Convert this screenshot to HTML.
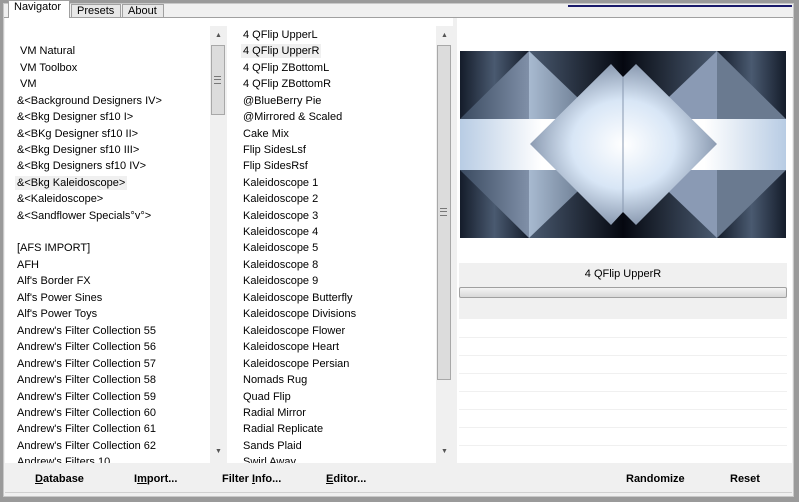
<!DOCTYPE html>
<html><head><style>
body{margin:0;width:799px;height:502px;overflow:hidden;background:#fff;font-family:"Liberation Sans",sans-serif;font-size:11px;color:#000;position:relative}
.a{position:absolute}
.list div{position:absolute;white-space:nowrap;line-height:14px}
.sb{position:absolute;background:#f0f0f0}
</style></head><body>
<div class="a" style="left:0;top:0;width:799px;height:502px;background:#9a9a9a"></div>
<div class="a" style="left:3px;top:3px;width:791px;height:494px;background:#f0f0f0;border:1px solid #c8c8c8;box-sizing:border-box"></div>
<div class="a" style="left:4px;top:17px;width:789px;height:1px;background:#a0a0a0"></div>
<div class="a" style="left:568px;top:5px;width:224px;height:2px;background:#1a1a6a"></div>
<!-- tabs -->
<div class="a" style="left:8px;top:0;width:62px;height:18px;background:#fff;border:1px solid #a0a0a0;border-bottom:none;box-sizing:border-box;padding:0 0 0 5px;line-height:12px">Navigator</div>
<div class="a" style="left:71px;top:4px;width:50px;height:14px;background:#e8e8e8;border:1px solid #a0a0a0;box-sizing:border-box;padding-left:5px;line-height:13px">Presets</div>
<div class="a" style="left:122px;top:4px;width:42px;height:14px;background:#e8e8e8;border:1px solid #a0a0a0;box-sizing:border-box;padding-left:5px;line-height:13px">About</div>
<!-- main white area -->
<div class="a" style="left:5px;top:18px;width:787px;height:445px;background:#fff"></div>
<!-- left list -->
<div class="list">
<div style="left:20px;top:44px">VM Natural</div>
<div style="left:20px;top:61px">VM Toolbox</div>
<div style="left:20px;top:77px">VM</div>
<div style="left:17px;top:94px">&amp;&lt;Background Designers IV&gt;</div>
<div style="left:17px;top:110px">&amp;&lt;Bkg Designer sf10 I&gt;</div>
<div style="left:17px;top:127px">&amp;&lt;BKg Designer sf10 II&gt;</div>
<div style="left:17px;top:143px">&amp;&lt;Bkg Designer sf10 III&gt;</div>
<div style="left:17px;top:159px">&amp;&lt;Bkg Designers sf10 IV&gt;</div>
<div style="left:15px;top:176px;background:#f0f0f0;padding:0 2px">&amp;&lt;Bkg Kaleidoscope&gt;</div>
<div style="left:17px;top:192px">&amp;&lt;Kaleidoscope&gt;</div>
<div style="left:17px;top:209px">&amp;&lt;Sandflower Specials°v°&gt;</div>
<div style="left:17px;top:241px">[AFS IMPORT]</div>
<div style="left:17px;top:258px">AFH</div>
<div style="left:17px;top:274px">Alf's Border FX</div>
<div style="left:17px;top:291px">Alf's Power Sines</div>
<div style="left:17px;top:307px">Alf's Power Toys</div>
<div style="left:17px;top:324px">Andrew's Filter Collection 55</div>
<div style="left:17px;top:340px">Andrew's Filter Collection 56</div>
<div style="left:17px;top:357px">Andrew's Filter Collection 57</div>
<div style="left:17px;top:373px">Andrew's Filter Collection 58</div>
<div style="left:17px;top:390px">Andrew's Filter Collection 59</div>
<div style="left:17px;top:406px">Andrew's Filter Collection 60</div>
<div style="left:17px;top:422px">Andrew's Filter Collection 61</div>
<div style="left:17px;top:439px">Andrew's Filter Collection 62</div>
<div style="left:17px;top:455px">Andrew's Filters 10</div>
</div>
<!-- middle list -->
<div class="list">
<div style="left:243px;top:28px">4 QFlip UpperL</div>
<div style="left:241px;top:44px;background:#f0f0f0;padding:0 2px">4 QFlip UpperR</div>
<div style="left:243px;top:61px">4 QFlip ZBottomL</div>
<div style="left:243px;top:77px">4 QFlip ZBottomR</div>
<div style="left:243px;top:94px">@BlueBerry Pie</div>
<div style="left:243px;top:110px">@Mirrored &amp; Scaled</div>
<div style="left:243px;top:127px">Cake Mix</div>
<div style="left:243px;top:143px">Flip SidesLsf</div>
<div style="left:243px;top:159px">Flip SidesRsf</div>
<div style="left:243px;top:176px">Kaleidoscope 1</div>
<div style="left:243px;top:192px">Kaleidoscope 2</div>
<div style="left:243px;top:209px">Kaleidoscope 3</div>
<div style="left:243px;top:225px">Kaleidoscope 4</div>
<div style="left:243px;top:241px">Kaleidoscope 5</div>
<div style="left:243px;top:258px">Kaleidoscope 8</div>
<div style="left:243px;top:274px">Kaleidoscope 9</div>
<div style="left:243px;top:291px">Kaleidoscope Butterfly</div>
<div style="left:243px;top:307px">Kaleidoscope Divisions</div>
<div style="left:243px;top:324px">Kaleidoscope Flower</div>
<div style="left:243px;top:340px">Kaleidoscope Heart</div>
<div style="left:243px;top:357px">Kaleidoscope Persian</div>
<div style="left:243px;top:373px">Nomads Rug</div>
<div style="left:243px;top:390px">Quad Flip</div>
<div style="left:243px;top:406px">Radial Mirror</div>
<div style="left:243px;top:422px">Radial Replicate</div>
<div style="left:243px;top:439px">Sands Plaid</div>
<div style="left:243px;top:455px">Swirl Away</div>
</div>
<!-- scrollbars -->
<div class="sb" style="left:210px;top:26px;width:17px;height:437px"></div>
<div class="a" style="left:211px;top:45px;width:14px;height:70px;background:#dcdcdc;border:1px solid #a8a8a8;box-sizing:border-box"></div>
<div class="a" style="left:214px;top:76px;width:7px;height:6px;border-top:1px solid #777;border-bottom:1px solid #777"></div>
<div class="a" style="left:214px;top:79px;width:7px;height:1px;background:#777"></div>
<div class="a" style="left:215px;top:32px;font-size:7px;color:#555">▲</div>
<div class="a" style="left:215px;top:448px;font-size:7px;color:#555">▼</div>
<div class="sb" style="left:436px;top:26px;width:17px;height:437px"></div>
<div class="a" style="left:437px;top:45px;width:14px;height:335px;background:#dcdcdc;border:1px solid #a8a8a8;box-sizing:border-box"></div>
<div class="a" style="left:440px;top:208px;width:7px;height:6px;border-top:1px solid #777;border-bottom:1px solid #777"></div>
<div class="a" style="left:440px;top:211px;width:7px;height:1px;background:#777"></div>
<div class="a" style="left:441px;top:32px;font-size:7px;color:#555">▲</div>
<div class="a" style="left:441px;top:448px;font-size:7px;color:#555">▼</div>
<div class="a" style="left:228px;top:18px;width:7px;height:445px;background:#fff"></div>
<div class="a" style="left:453px;top:18px;width:4px;height:474px;background:#f0f0f0"></div>
<!-- preview -->
<svg class="a" style="left:460px;top:51px" width="326" height="187" viewBox="0 0 326 187">
<defs>
<linearGradient id="dk" x1="0" x2="1"><stop offset="0" stop-color="#141c2a"/><stop offset=".5" stop-color="#4a5a70"/><stop offset="1" stop-color="#141c2a"/></linearGradient>
<linearGradient id="dk2" x1="0" x2="1"><stop offset="0" stop-color="#4a5a70"/><stop offset="1" stop-color="#050810"/></linearGradient>
<linearGradient id="dk3" x1="1" x2="0"><stop offset="0" stop-color="#4a5a70"/><stop offset="1" stop-color="#050810"/></linearGradient>
<linearGradient id="tri" x1="0" x2="1"><stop offset="0" stop-color="#3a4a60"/><stop offset="1" stop-color="#8090a8"/></linearGradient>
<linearGradient id="tri2" x1="0" x2="1"><stop offset="0" stop-color="#a8bad0"/><stop offset="1" stop-color="#5a6a80"/></linearGradient>
<linearGradient id="band" x1="0" x2="1"><stop offset="0" stop-color="#b8cce4"/><stop offset=".25" stop-color="#fff"/><stop offset=".75" stop-color="#fff"/><stop offset="1" stop-color="#b8cce4"/></linearGradient>
<radialGradient id="dia" cx=".5" cy=".5" r=".55"><stop offset="0" stop-color="#fff"/><stop offset=".5" stop-color="#d8e6f6"/><stop offset="1" stop-color="#7a8aa2"/></radialGradient>
</defs>
<rect x="0" y="0" width="69" height="187" fill="url(#dk)"/>
<rect x="69" y="0" width="94" height="187" fill="url(#dk2)"/>
<rect x="163" y="0" width="94" height="187" fill="url(#dk3)"/>
<rect x="257" y="0" width="69" height="187" fill="url(#dk)"/>
<polygon points="0,68 69,0 69,68" fill="url(#tri)"/>
<polygon points="0,119 69,187 69,119" fill="url(#tri)"/>
<polygon points="69,0 69,68 140,68" fill="url(#tri2)"/>
<polygon points="69,187 69,119 140,119" fill="url(#tri2)"/>
<polygon points="326,68 257,0 257,68" fill="url(#tri)" transform="translate(583,0) scale(-1,1) translate(257,0)" opacity="0"/>
<polygon points="326,68 257,0 257,68" fill="#6a7a90"/>
<polygon points="326,119 257,187 257,119" fill="#6a7a90"/>
<polygon points="257,0 257,68 186,68" fill="#8a9ab4"/>
<polygon points="257,187 257,119 186,119" fill="#8a9ab4"/>
<rect x="0" y="68" width="326" height="51" fill="url(#band)"/>
<polygon points="151,13 163,26 176,13 257,93 176,174 163,161 151,174 70,93" fill="url(#dia)"/>
<line x1="163" y1="26" x2="163" y2="161" stroke="#8898b0" stroke-width="1"/>
</svg>
<!-- right controls -->
<div class="a" style="left:459px;top:263px;width:328px;height:56px;background:#f0f0f0"></div>
<div class="a" style="left:459px;top:266px;width:328px;text-align:center;line-height:16px">4 QFlip UpperR</div>
<div class="a" style="left:459px;top:287px;width:328px;height:11px;background:linear-gradient(#f4f4f4,#d8d8d8);border:1px solid #a0a0a0;box-sizing:border-box;border-radius:2px"></div>
<div class="a" style="left:459px;top:337px;width:328px;height:1px;background:#f0f0f0"></div>
<div class="a" style="left:459px;top:355px;width:328px;height:1px;background:#f0f0f0"></div>
<div class="a" style="left:459px;top:373px;width:328px;height:1px;background:#f0f0f0"></div>
<div class="a" style="left:459px;top:391px;width:328px;height:1px;background:#f0f0f0"></div>
<div class="a" style="left:459px;top:409px;width:328px;height:1px;background:#f0f0f0"></div>
<div class="a" style="left:459px;top:427px;width:328px;height:1px;background:#f0f0f0"></div>
<div class="a" style="left:459px;top:445px;width:328px;height:1px;background:#f0f0f0"></div>
<div class="a" style="left:459px;top:463px;width:328px;height:28px;background:#f0f0f0"></div>
<div class="a" style="left:5px;top:463px;width:448px;height:29px;background:#f0f0f0"></div>
<div class="a" style="left:5px;top:492px;width:787px;height:1px;background:#d0d0d0"></div>
<!-- buttons -->
<div class="a" style="font-weight:bold;left:35px;top:473px"><u>D</u>atabase</div>
<div class="a" style="font-weight:bold;left:134px;top:473px">I<u>m</u>port...</div>
<div class="a" style="font-weight:bold;left:222px;top:473px">Filter <u>I</u>nfo...</div>
<div class="a" style="font-weight:bold;left:326px;top:473px"><u>E</u>ditor...</div>
<div class="a" style="font-weight:bold;left:626px;top:473px">Randomize</div>
<div class="a" style="font-weight:bold;left:730px;top:473px">Reset</div>
</body></html>
